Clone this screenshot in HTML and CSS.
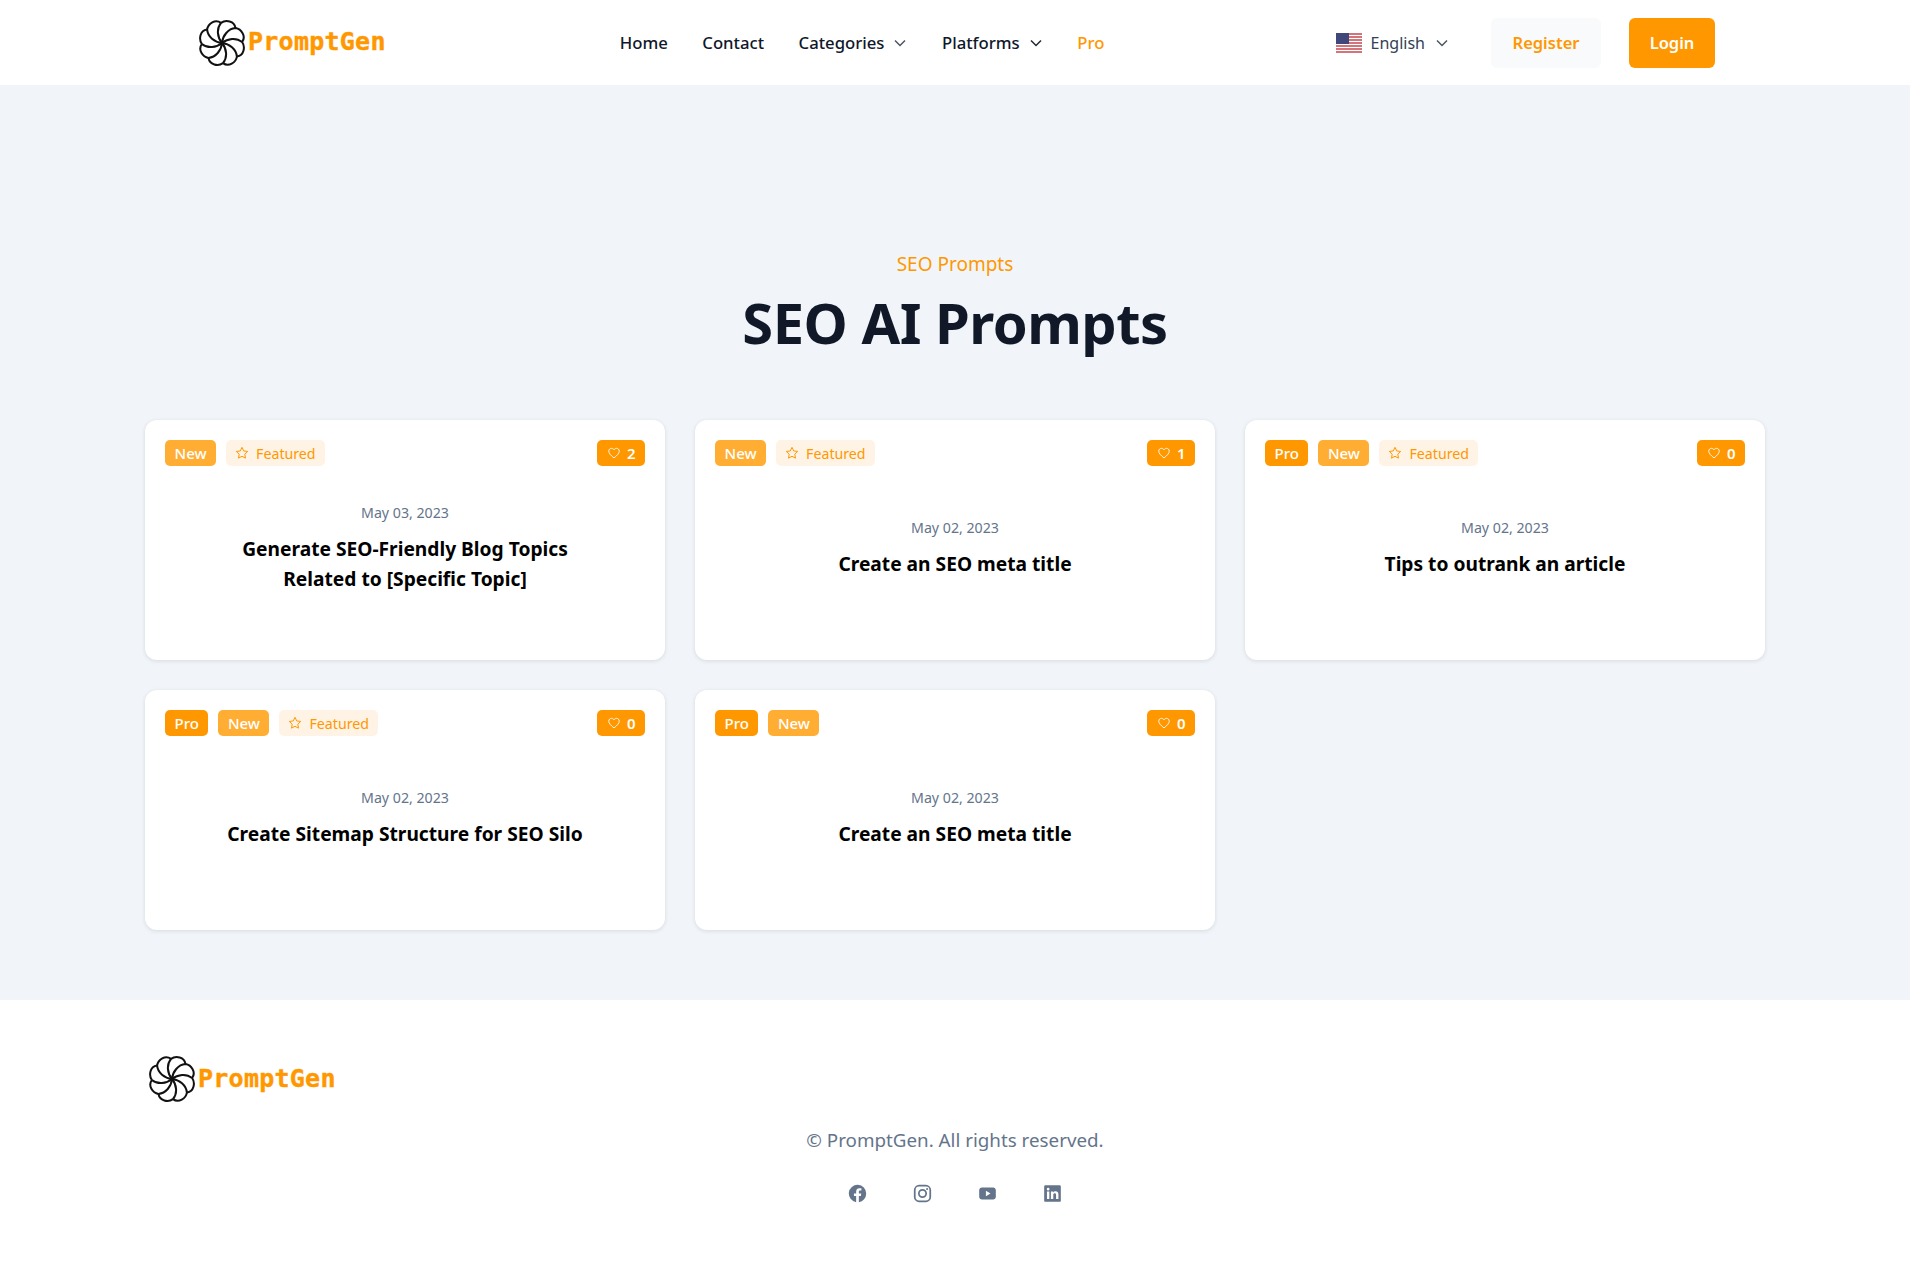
FILE: index.html
```html
<!DOCTYPE html>
<html lang="en">
<head>
<meta charset="utf-8">
<title>SEO AI Prompts - PromptGen</title>
<link rel="stylesheet" href="styles.css">
</head>
<body>
<svg class="defs" width="0" height="0" aria-hidden="true">
  <defs>
    <g id="logo-mark" fill="none" stroke="#111" stroke-width="2.100">
      <g id="petal"><path d="M0 0C-5-6-6-15-1-21C4-24.500 13-23 14.100-15.600"/></g>
      <use href="#petal" transform="rotate(45)"/>
      <use href="#petal" transform="rotate(90)"/>
      <use href="#petal" transform="rotate(135)"/>
      <use href="#petal" transform="rotate(180)"/>
      <use href="#petal" transform="rotate(225)"/>
      <use href="#petal" transform="rotate(270)"/>
      <use href="#petal" transform="rotate(315)"/>
      <circle r="1.600" fill="#111" stroke="none"/>
    </g>
    <path id="star" d="M12 3.500l2.600 5.400 5.900.8-4.300 4.100 1 5.900-5.200-2.800-5.200 2.800 1-5.900-4.300-4.100 5.900-.8z"/>
    <path id="heart" d="M12 20.500C6 15.500 3 12.500 3 8.800 3 6 5.100 4 7.600 4c1.800 0 3.400 1 4.400 2.700C13 5 14.600 4 16.400 4 18.900 4 21 6 21 8.800c0 3.700-3 6.700-9 11.700z"/>
    <path id="chev" d="M2 4.500l5 5 5-5"/>
  </defs>
</svg>

<header class="site-header">
  <a class="logo" href="#">
    <svg class="logo-mark" viewBox="-24 -24 48 48"><use href="#logo-mark"/></svg>
    <span class="logo-text">PromptGen</span>
  </a>
  <nav class="main-nav">
    <a href="#">Home</a>
    <a href="#">Contact</a>
    <a href="#" class="has-caret">Categories <svg class="caret muted" viewBox="0 0 14 14"><use href="#chev"/></svg></a>
    <a href="#" class="has-caret">Platforms <svg class="caret" viewBox="0 0 14 14"><use href="#chev"/></svg></a>
    <a href="#" class="nav-pro">Pro</a>
  </nav>
  <div class="header-actions">
    <div class="lang">
      <svg class="flag" viewBox="0 0 26 20">
        <rect width="26" height="20" fill="#fff"/>
        <path d="M0 1h26M0 4h26M0 7h26M0 10h26M0 13h26M0 16h26M0 19h26" stroke="#c4474f" stroke-width="1.500"/>
        <rect width="13" height="11" fill="#40487a"/>
      </svg>
      <span>English</span>
      <svg class="caret muted" viewBox="0 0 14 14"><use href="#chev"/></svg>
    </div>
    <a class="btn btn-soft" href="#">Register</a>
    <a class="btn btn-solid" href="#">Login</a>
  </div>
</header>

<main class="content">
  <div class="section-head">
    <p class="eyebrow">SEO Prompts</p>
    <h1>SEO AI Prompts</h1>
  </div>
  <div class="card-grid">
    <article class="card">
      <div class="card-top">
        <span class="tag tag-new">New</span>
        <span class="tag tag-feat"><svg class="ico-star" viewBox="0 0 24 24"><use href="#star"/></svg>Featured</span>
        <span class="likes"><svg class="ico-heart" viewBox="0 0 24 24"><use href="#heart"/></svg>2</span>
      </div>
      <div class="card-body">
        <time>May 03, 2023</time>
        <h2>Generate SEO-Friendly Blog Topics Related to [Specific Topic]</h2>
      </div>
    </article>
    <article class="card">
      <div class="card-top">
        <span class="tag tag-new">New</span>
        <span class="tag tag-feat"><svg class="ico-star" viewBox="0 0 24 24"><use href="#star"/></svg>Featured</span>
        <span class="likes"><svg class="ico-heart" viewBox="0 0 24 24"><use href="#heart"/></svg>1</span>
      </div>
      <div class="card-body">
        <time>May 02, 2023</time>
        <h2>Create an SEO meta title</h2>
      </div>
    </article>
    <article class="card">
      <div class="card-top">
        <span class="tag tag-pro">Pro</span>
        <span class="tag tag-new">New</span>
        <span class="tag tag-feat"><svg class="ico-star" viewBox="0 0 24 24"><use href="#star"/></svg>Featured</span>
        <span class="likes"><svg class="ico-heart" viewBox="0 0 24 24"><use href="#heart"/></svg>0</span>
      </div>
      <div class="card-body">
        <time>May 02, 2023</time>
        <h2>Tips to outrank an article</h2>
      </div>
    </article>
    <article class="card">
      <div class="card-top">
        <span class="tag tag-pro">Pro</span>
        <span class="tag tag-new">New</span>
        <span class="tag tag-feat"><svg class="ico-star" viewBox="0 0 24 24"><use href="#star"/></svg>Featured</span>
        <span class="likes"><svg class="ico-heart" viewBox="0 0 24 24"><use href="#heart"/></svg>0</span>
      </div>
      <div class="card-body">
        <time>May 02, 2023</time>
        <h2>Create Sitemap Structure for SEO Silo</h2>
      </div>
    </article>
    <article class="card">
      <div class="card-top">
        <span class="tag tag-pro">Pro</span>
        <span class="tag tag-new">New</span>
        <span class="likes"><svg class="ico-heart" viewBox="0 0 24 24"><use href="#heart"/></svg>0</span>
      </div>
      <div class="card-body">
        <time>May 02, 2023</time>
        <h2>Create an SEO meta title</h2>
      </div>
    </article>
  </div>
</main>

<footer class="site-footer">
  <a class="logo" href="#">
    <svg class="logo-mark" viewBox="-24 -24 48 48"><use href="#logo-mark"/></svg>
    <span class="logo-text">PromptGen</span>
  </a>
  <p class="copy">© PromptGen. All rights reserved.</p>
  <div class="socials">
    <a href="#"><svg viewBox="0 0 24 24"><path d="M23 12a11 11 0 1 0-12.700 10.900v-7.700H7.500V12h2.800V9.600c0-2.800 1.600-4.300 4.100-4.300 1.200 0 2.500.2 2.500.2v2.700h-1.400c-1.400 0-1.800.9-1.800 1.700V12h3l-.5 3.200h-2.500v7.700A11 11 0 0 0 23 12z"/></svg></a>
    <a href="#"><svg viewBox="0 0 24 24" class="ig"><rect x="2.200" y="2.200" width="19.600" height="19.600" rx="5.500"/><circle cx="12" cy="12" r="4.600"/><circle class="dot" cx="17.800" cy="6.200" r="1.300"/></svg></a>
    <a href="#"><svg viewBox="0 0 24 24"><path fill-rule="evenodd" d="M5 4.500h14c2 0 3.500 1.500 3.500 3.500v8c0 2-1.500 3.500-3.500 3.500H5c-2 0-3.500-1.500-3.500-3.500V8C1.500 6 3 4.500 5 4.500zM10 8.500v7l5.800-3.500z"/></svg></a>
    <a href="#"><svg viewBox="0 0 24 24"><path fill-rule="evenodd" d="M3 1.500h18A1.500 1.500 0 0 1 22.500 3v18a1.500 1.500 0 0 1-1.500 1.500H3A1.500 1.500 0 0 1 1.500 21V3A1.500 1.500 0 0 1 3 1.500zM5 9.500V19h3V9.500zM6.500 4.800a1.700 1.700 0 1 0 0 3.400 1.700 1.700 0 0 0 0-3.400zM10 9.500V19h3v-5c0-1.400.7-2.200 1.800-2.200s1.700.8 1.700 2.200v5h3v-5.700c0-2.700-1.500-4-3.500-4-1.400 0-2.400.7-3 1.600V9.500z"/></svg></a>
  </div>
</footer>
</body>
</html>
```

FILE: styles.css
```css
* { box-sizing: border-box; }
html, body { margin: 0; padding: 0; }
body {
  font-family: "Noto Sans", "Open Sans", sans-serif;
  background: #fff;
  color: #0f172a;
  min-height: 1270px;
}
a { text-decoration: none; color: inherit; }
.defs { position: absolute; }

.site-header {
  height: 85px;
  background: #fff;
  display: flex;
  align-items: center;
  padding: 0 195px 0 199px;
}
.logo { display: inline-flex; align-items: center; gap: 3px; }
.logo-mark { width: 46px; height: 46px; display: block; }
.logo-text {
  font-family: "DejaVu Sans Mono", monospace;
  font-weight: 700;
  font-size: 25px;
  letter-spacing: .25px;
  color: #ff9800;
  -webkit-text-stroke: .4px #ff9800;
  position: relative;
  top: -1px;
}
.main-nav {
  margin-left: 234px;
  display: flex;
  align-items: center;
  gap: 34.500px;
  font-size: 16.700px;
  font-weight: 500;
}
.has-caret { display: inline-flex; align-items: center; gap: 9px; }
.caret { width: 14px; height: 14px; fill: none; stroke: #1f2937; stroke-width: 1.500; display: block; }
.caret.muted { stroke: #4b5563; }
.nav-pro { color: #ff9800; }

.header-actions { margin-left: auto; display: flex; align-items: center; }
.lang { display: flex; align-items: center; gap: 9px; font-size: 16px; color: #334155; margin-right: 42px; }
.flag { width: 26px; height: 20px; display: block; }
.lang span { margin-right: 1px; }
.btn {
  height: 50px;
  display: flex;
  align-items: center;
  justify-content: center;
  border-radius: 6px;
  font-size: 16.500px;
  font-weight: 600;
}
.btn-soft { width: 110px; background: #f8fafc; color: #ff9800; margin-right: 28px; }
.btn-solid { width: 86px; background: #ff9800; color: #fff; }

.content {
  background: #f1f5f9;
  height: 915px;
  padding: 165px 145px 0;
}
.section-head { text-align: center; margin-bottom: 62px; }
.eyebrow { margin: 0; font-size: 19px; line-height: 28px; font-weight: 400; color: #ff9800; }
h1 { margin: 8px 0 0; font-size: 56px; line-height: 72px; font-weight: 700; color: #111827; letter-spacing: -.5px; }
.card-grid { display: grid; grid-template-columns: repeat(3, 520px); gap: 30px; grid-auto-rows: 240px; }
.card {
  background: #fff;
  border-radius: 12px;
  box-shadow: 0 1px 4px rgba(15, 23, 42, .12);
  padding: 20px;
  display: flex;
  flex-direction: column;
}
.card-top { display: flex; align-items: center; gap: 10px; }
.tag {
  height: 26px;
  display: inline-flex;
  align-items: center;
  padding: 0 9.500px;
  border-radius: 5px;
  font-size: 15px;
  font-weight: 500;
}
.tag-new { background: #ffad33; color: #fff; }
.tag-pro { background: #ff9800; color: #fff; }
.tag-feat { background: #fff3e6; color: #ff9800; font-weight: 400; font-size: 14.200px; padding-left: 8px; }
.ico-star { width: 16px; height: 16px; fill: none; stroke: #ff9800; stroke-width: 1.500; margin-right: 6px; }
.likes {
  margin-left: auto;
  height: 26px;
  display: inline-flex;
  align-items: center;
  gap: 6px;
  padding: 0 9.500px;
  border-radius: 5px;
  background: #ff9800;
  color: #fff;
  font-size: 15px;
  font-weight: 600;
}
.ico-heart { width: 14px; height: 14px; fill: none; stroke: #fff; stroke-width: 1.500; }
.card-body {
  flex: 1;
  display: flex;
  flex-direction: column;
  align-items: center;
  justify-content: center;
  text-align: center;
  padding: 0 50px 10px;
}
time { font-size: 14.200px; line-height: 22px; color: #64748b; }
h2 { margin: 10px 0 0; font-size: 19.200px; line-height: 30px; font-weight: 700; color: #000; }

.site-footer { background: #fff; height: 270px; padding: 56px 149px 0; }
.site-footer .logo { display: flex; }
.copy { margin: 23px 0 0; text-align: center; font-size: 18.800px; line-height: 30px; color: #64748b; }
.socials { margin-top: 29px; display: flex; justify-content: center; gap: 46px; }
.socials a { display: block; width: 19px; height: 19px; }
.socials svg { display: block; width: 19px; height: 19px; fill: #64748b; }
.socials .ig { fill: none; stroke: #64748b; stroke-width: 2.200; }
.socials .ig .dot { fill: #64748b; stroke: none; }
```
